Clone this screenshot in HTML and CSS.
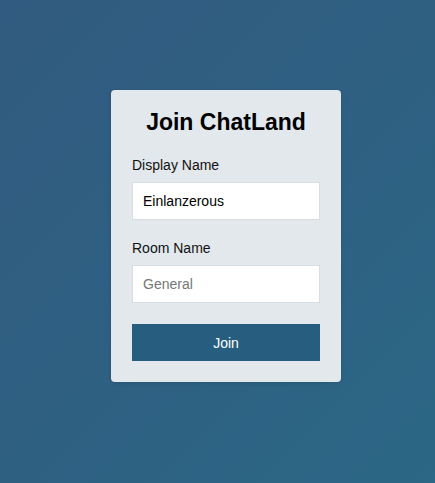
FILE: index.html
```html
<!DOCTYPE html>
<html lang="en">
<head>
<meta charset="utf-8">
<title>Join ChatLand</title>
<link rel="stylesheet" href="styles.css">
</head>
<body>
<main class="page">
  <form class="card">
    <h1 class="title">Join ChatLand</h1>
    <label class="label" for="name">Display Name</label>
    <input class="field" id="name" type="text" value="Einlanzerous">
    <label class="label" for="room">Room Name</label>
    <input class="field" id="room" type="text" placeholder="General">
    <button class="btn" type="button">Join</button>
  </form>
</main>
</body>
</html>
```

FILE: styles.css
```css
* { box-sizing: border-box; }
html, body {
  margin: 0;
  height: 100%;
}
body {
  font-family: "Liberation Sans", Arial, sans-serif;
  background: linear-gradient(135deg, #315b80 0%, #2e6183 60%, #2b6786 100%);
}
.page {
  min-height: 100%;
  display: flex;
  justify-content: center;
  padding: 90px 0 0 17px;
}
.card {
  width: 230px;
  height: 292px;
  background: #e3e8ec;
  border-radius: 4px;
  padding: 18px 21px 21px;
  display: flex;
  flex-direction: column;
  box-shadow: 0 1px 4px rgba(0,0,0,0.12);
}
.title {
  margin: 0 0 21px;
  font-size: 23px;
  line-height: 28px;
  font-weight: bold;
  text-align: center;
  color: #000;
}
.label {
  font-size: 14px;
  line-height: 16px;
  color: #111;
  margin-bottom: 9px;
}
.field {
  height: 38px;
  border: 1px solid #d8dde1;
  background: #fff;
  padding: 0 10px;
  font-family: inherit;
  font-size: 14px;
  color: #000;
  margin: 0 0 20px;
  outline: none;
  border-radius: 0;
}
.field::placeholder { color: #767676; }
.btn {
  margin-top: 1px;
  height: 37px;
  border: none;
  background: #275e80;
  color: #fff;
  font-family: inherit;
  font-size: 14px;
  cursor: pointer;
}
```
